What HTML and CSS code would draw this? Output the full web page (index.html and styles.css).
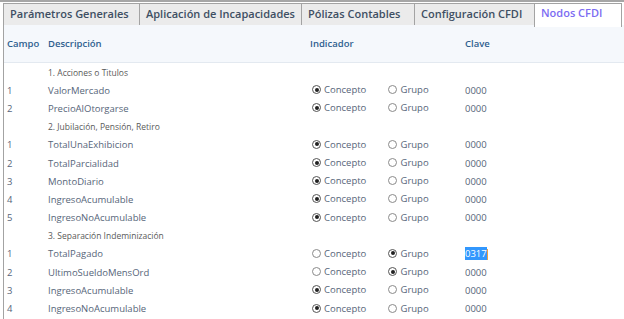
FILE: index.html
```html
<!DOCTYPE html>
<html lang="es">
<head>
    <meta charset="UTF-8">
    <title>Nodos CFDI</title>
    <link rel="stylesheet" href="styles.css">
</head>
<body>
    <div class="panel">
        <ul class="tabs">
            <li class="tab tab-general">Parámetros Generales</li>
            <li class="tab tab-incap">Aplicación de Incapacidades</li>
            <li class="tab tab-polizas">Pólizas Contables</li>
            <li class="tab tab-config">Configuración CFDI</li>
            <li class="tab tab-nodos active">Nodos CFDI</li>
        </ul>
        <div class="content">
            <table class="nodes">
                <thead>
                    <tr>
                        <th class="col-campo">Campo</th>
                        <th class="col-desc">Descripción</th>
                        <th class="col-ind">Indicador</th>
                        <th class="col-clave">Clave</th>
                    </tr>
                </thead>
                <tbody id="rows"></tbody>
            </table>
        </div>
    </div>

    <script>
        const data = [
            { group: '1. Acciones o Titulos' },
            { campo: 1, desc: 'ValorMercado', ind: 'c', clave: '0000' },
            { campo: 2, desc: 'PrecioAlOtorgarse', ind: 'c', clave: '0000' },
            { group: '2. Jubilación, Pensión, Retiro' },
            { campo: 1, desc: 'TotalUnaExhibicion', ind: 'c', clave: '0000' },
            { campo: 2, desc: 'TotalParcialidad', ind: 'c', clave: '0000' },
            { campo: 3, desc: 'MontoDiario', ind: 'c', clave: '0000' },
            { campo: 4, desc: 'IngresoAcumulable', ind: 'c', clave: '0000' },
            { campo: 5, desc: 'IngresoNoAcumulable', ind: 'c', clave: '0000' },
            { group: '3. Separación Indeminización' },
            { campo: 1, desc: 'TotalPagado', ind: 'g', clave: '0317', selected: true },
            { campo: 2, desc: 'UltimoSueldoMensOrd', ind: 'g', clave: '0000' },
            { campo: 3, desc: 'IngresoAcumulable', ind: 'c', clave: '0000' },
            { campo: 4, desc: 'IngresoNoAcumulable', ind: 'c', clave: '0000' }
        ];

        const tbody = document.getElementById('rows');
        data.forEach(row => {
            const tr = document.createElement('tr');
            if (row.group) {
                tr.className = 'group';
                tr.innerHTML = `<td></td><td colspan="3">${row.group}</td>`;
            } else {
                const c = row.ind === 'c' ? ' checked' : '';
                const g = row.ind === 'g' ? ' checked' : '';
                const clave = row.selected ? `<span class="selected">${row.clave}</span><span class="caret"></span>` : row.clave;
                tr.innerHTML = `
                    <td>${row.campo}</td>
                    <td>${row.desc}</td>
                    <td>
                        <span class="option"><span class="radio${c}"></span>Concepto</span>
                        <span class="option"><span class="radio${g}"></span>Grupo</span>
                    </td>
                    <td>${clave}</td>
                `;
            }
            tbody.appendChild(tr);
        });
    </script>
</body>
</html>
```

FILE: styles.css
```css
body {
    margin: 0;
    background-color: #fff;
    font-family: 'Open Sans', sans-serif;
    color: #566579;
}
.panel {
    border-top: 2px solid #a6a6a6;
    padding-top: 1px;
    padding-left: 3px;
}
.tabs {
    list-style: none;
    margin: 0;
    padding: 0;
    display: flex;
    height: 22px;
}
.tab {
    box-sizing: border-box;
    height: 22px;
    padding: 2px 0 0 6px;
    background-color: #ebebeb;
    border: 1px solid #a3a3a3;
    border-right: none;
    border-bottom: none;
    font-size: 11px;
    font-weight: 600;
    color: #3e4f63;
    white-space: nowrap;
}
.tab-general { width: 136px; }
.tab-incap { width: 162px; }
.tab-polizas { width: 113px; }
.tab-config { width: 120px; }
.tab.active {
    width: 88px;
    height: 24px;
    padding-left: 6px;
    padding-top: 1px;
    background-color: #fff;
    color: #7c6cf2;
    border-right: 1px solid #a3a3a3;
}
.content {
    border-left: 1px solid #a3a3a3;
    height: 300px;
}
.nodes {
    border-collapse: collapse;
    width: 100%;
}
.nodes th {
    height: 37px;
    padding: 0;
    text-align: left;
    font-size: 9.5px;
    font-weight: 600;
    color: #2f5f8f;
    background-color: #f5f8fc;
    border-bottom: 1px solid #e3e9f0;
}
.col-campo { width: 41px; padding-left: 3px !important; }
.col-desc { width: 262px; }
.col-ind { width: 155px; }
.nodes td {
    height: 18.2px;
    padding: 0;
    font-size: 9.5px;
    white-space: nowrap;
}
.nodes td:first-child {
    padding-left: 3px;
}
.nodes tr.group td {
    font-size: 8.5px;
    color: #5a5a5a;
}
.option {
    display: inline-flex;
    align-items: center;
    gap: 3px;
    width: 74px;
}
.radio {
    box-sizing: border-box;
    width: 9px;
    height: 9px;
    margin-left: 2px;
    border: 1px solid #8a8a8a;
    border-radius: 50%;
    background-color: #fff;
    position: relative;
}
.radio.checked {
    border-color: #555;
}
.radio.checked::after {
    content: '';
    position: absolute;
    left: 1.5px;
    top: 1.5px;
    width: 4px;
    height: 4px;
    border-radius: 50%;
    background-color: #222;
}
.selected {
    background-color: #3297fd;
    color: #fff;
}
.caret {
    display: inline-block;
    width: 1px;
    height: 11px;
    vertical-align: middle;
    background-color: #f0a040;
}
```
